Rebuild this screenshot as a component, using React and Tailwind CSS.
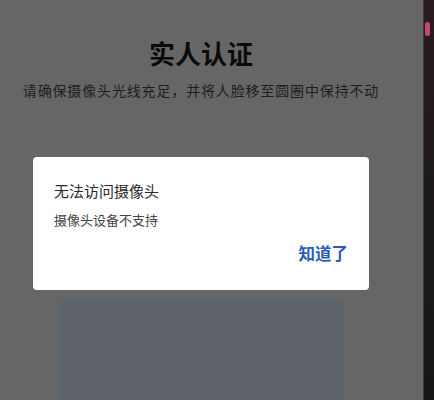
import React from "react";

export default function App() {
  const font = { fontFamily: '"Noto Sans CJK SC", "Noto Sans", sans-serif' };
  return (
    <div className="w-[434px] h-[400px] flex overflow-hidden" style={font}>
      <div className="relative w-[423px] h-full bg-[#666666]">
        <div className="w-[402px] flex flex-col items-center pt-[37px]">
          <div className="text-[26px] leading-[32px] font-bold text-[#0a0a0a]">实人认证</div>
          <div className="mt-[11px] text-[14px] leading-[20px] text-[#1e1e1e] tracking-[0.85px] whitespace-nowrap">请确保摄像头光线充足，并将人脸移至圆圈中保持不动</div>
          <div className="mt-[198px] w-[286px] h-[120px] rounded-[4px] bg-[#5f646a]"></div>
        </div>
        <div className="absolute left-[33px] top-[157px] w-[336px] h-[133px] bg-white rounded-[4px] px-[21px] pt-[24px] flex flex-col">
          <div className="text-[15px] leading-[20px] text-[#2a2a2a]">无法访问摄像头</div>
          <div className="mt-[10px] text-[13px] leading-[18px] text-[#444]">摄像头设备不支持</div>
          <div className="mt-[13px] flex justify-end">
            <span className="text-[16.5px] leading-[22px] font-bold text-[#2a5cb3]">知道了</span>
          </div>
        </div>
      </div>
      <div className="relative w-[11px] h-full bg-gradient-to-b from-[#2a1b22] via-[#1d1a1b] to-[#171515] border-l border-[#3a3a3a]">
        <div className="absolute left-[1px] top-[22px] w-[5px] h-[14px] rounded-full bg-[#c04a72]"></div>
      </div>
    </div>
  );
}
